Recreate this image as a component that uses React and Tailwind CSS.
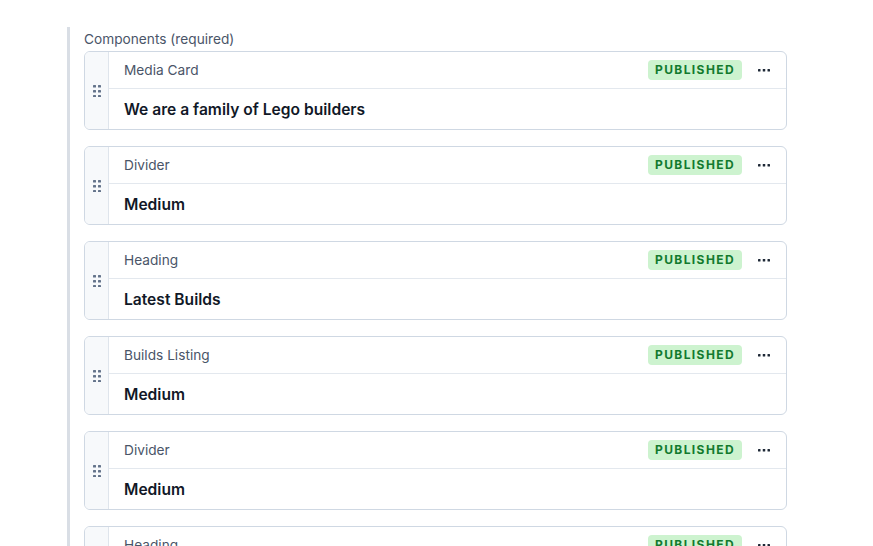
import React from 'react';

const blocks = [
  { type: 'Media Card', value: 'We are a family of Lego builders' },
  { type: 'Divider', value: 'Medium' },
  { type: 'Heading', value: 'Latest Builds' },
  { type: 'Builds Listing', value: 'Medium' },
  { type: 'Divider', value: 'Medium' },
  { type: 'Heading', value: 'Latest Builds' },
];

const DragHandle = () => (
  <svg width="8" height="12" viewBox="0 0 8 12" fill="#64748b">
    {[0, 5, 10].map((y) =>
      [0, 5].map((x) => <rect key={`${x}-${y}`} x={x} y={y} width="3" height="2.5" rx="0.6" />)
    )}
  </svg>
);

const MoreIcon = () => (
  <svg width="12" height="4" viewBox="0 0 12 4" fill="#1f2937">
    <rect x="0" y="1" width="2.5" height="2.5" rx="0.5" />
    <rect x="4.75" y="1" width="2.5" height="2.5" rx="0.5" />
    <rect x="9.5" y="1" width="2.5" height="2.5" rx="0.5" />
  </svg>
);

const BlockCard = ({ type, value }) => (
  <div className="flex w-[703px] shrink-0 rounded-md border border-[#cfd8e3] bg-white overflow-hidden">
    <div className="w-[24px] shrink-0 flex items-center justify-center bg-[#f7f9fb] border-r border-[#dfe5ec]">
      <DragHandle />
    </div>
    <div className="flex-1 flex flex-col">
      <div className="h-[37px] flex items-center pl-[15px] pr-[16px] border-b border-[#e3e8ee]">
        <span className="text-[13.7px] text-[#4a5568]">{type}</span>
        <span className="ml-auto h-[20px] px-[7px] flex items-center rounded bg-[#cdf3cf] text-[12px] font-bold tracking-[1.4px] text-[#137a2e]">
          PUBLISHED
        </span>
        <button className="ml-[16px] w-[12px] flex items-center justify-center">
          <MoreIcon />
        </button>
      </div>
      <div className="h-[40px] flex items-center pl-[15px] pt-[2px]">
        <span className="text-[15.6px] font-semibold text-[#111827]">{value}</span>
      </div>
    </div>
  </div>
);

export default function App() {
  return (
    <div className="w-[873px] h-[546px] overflow-hidden bg-white font-['Inter',sans-serif]">
      <div className="ml-[67px] mt-[27px] h-[519px] border-l-[3px] border-[#d9dee5] pl-[14px] flex flex-col">
        <div className="text-[13.7px] leading-[24px] text-[#4a5568]">Components (required)</div>
        <div className="flex flex-col gap-[16px]">
          {blocks.map((b, i) => (
            <BlockCard key={i} type={b.type} value={b.value} />
          ))}
        </div>
      </div>
    </div>
  );
}
